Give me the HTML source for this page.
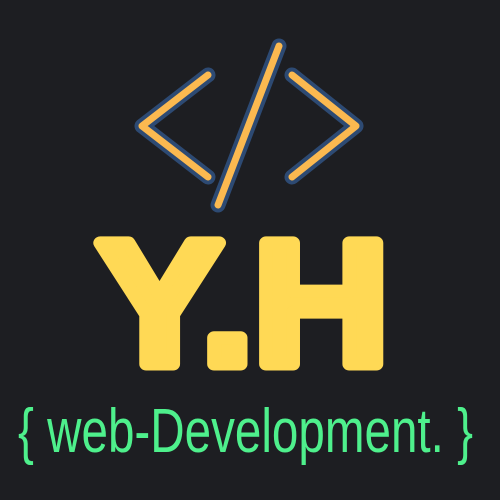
<!DOCTYPE html>
<html><head><style>
html,body{margin:0;padding:0;background:#1d1e22;}
svg{display:block}
</style></head><body>
<svg width="500" height="500" viewBox="0 0 500 500" xmlns="http://www.w3.org/2000/svg">
<rect width="500" height="500" fill="#1d1e22"/>
<g fill="none" stroke-linecap="round" stroke-linejoin="round">
<g stroke="#2d4a73" stroke-width="15">
<polyline points="208,75 142,126 208,177"/>
<line x1="279" y1="46" x2="218" y2="205"/>
<polyline points="292,75 356,126 292,177"/>
</g>
<g stroke="#fbb950" stroke-width="7">
<polyline points="208,75 142,126 208,177"/>
<line x1="279" y1="46" x2="218" y2="205"/>
<polyline points="292,75 356,126 292,177"/>
</g>
</g>
<text x="97" y="364" font-family="Liberation Sans, sans-serif" font-weight="bold" font-size="176" fill="#ffd955" stroke="#ffd955" stroke-width="13" stroke-linejoin="round" textLength="292" lengthAdjust="spacingAndGlyphs">Y.H</text>
<text x="18" y="452" font-family="Liberation Sans Narrow, Liberation Sans, sans-serif" font-size="62" fill="#4ef08c" textLength="455" lengthAdjust="spacingAndGlyphs">{ web-Development. }</text>
</svg>
</body></html>
